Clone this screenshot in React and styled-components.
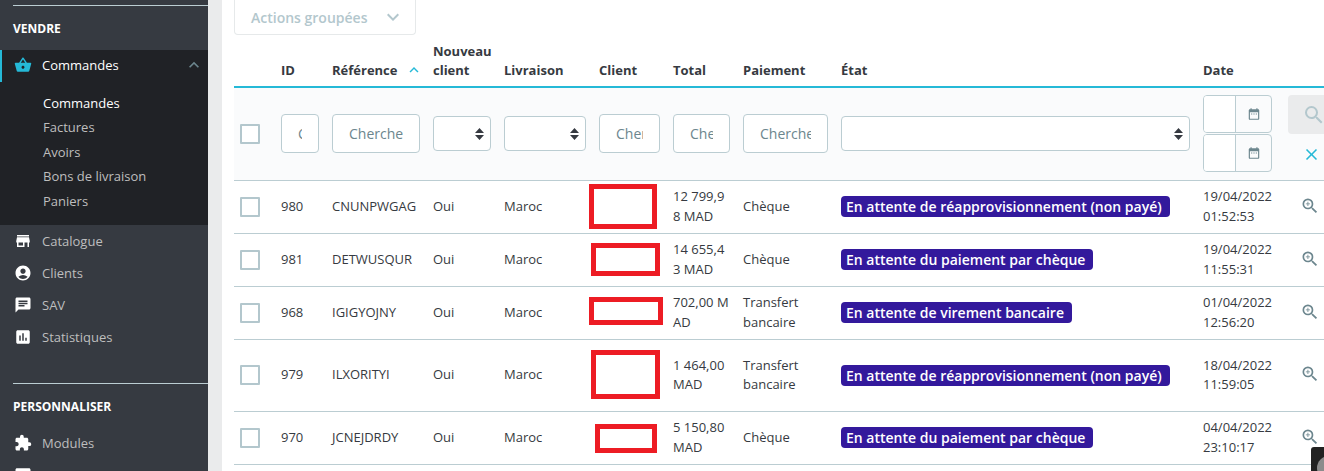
import React from "react";
import styled, { createGlobalStyle } from "styled-components";
import {
  MdShoppingBasket,
  MdStore,
  MdAccountCircle,
  MdChat,
  MdAssessment,
  MdExtension,
  MdDesktopMac,
  MdKeyboardArrowUp,
  MdKeyboardArrowDown,
  MdDateRange,
  MdSearch,
  MdClose,
  MdZoomIn,
} from "react-icons/md";

const GlobalStyle = createGlobalStyle`
  html, body {
    margin: 0;
    height: 471px;
    overflow: hidden;
    background: #fff;
    font-family: "Open Sans", "Liberation Sans", sans-serif;
    font-size: 13px;
    color: #363a41;
  }
  * { box-sizing: border-box; }
`;

const Page = styled.div`
  display: flex;
  width: 1324px;
  height: 471px;
  overflow: hidden;
`;

/* sidebar */
const Sidebar = styled.nav`
  flex: 0 0 208px;
  background: #363a41;
  padding-top: 5px;
  overflow: hidden;
`;

const Rule = styled.div`
  height: 1px;
  margin-left: 13px;
  background: #bbcdd2;
  margin-top: ${(p) => p.$top || 0}px;
`;

const SectionTitle = styled.div`
  height: ${(p) => p.$height}px;
  padding-left: 13px;
  padding-top: ${(p) => p.$shift || 0}px;
  display: flex;
  align-items: center;
  font-size: 12px;
  font-weight: 700;
  color: #fff;
  text-transform: uppercase;
`;

const ActiveGroup = styled.div`
  background: #202226;
  height: 175px;
`;

const NavRow = styled.div`
  height: 32px;
  display: flex;
  align-items: center;
  padding-left: ${(p) => (p.$active ? 12 : 14)}px;
  padding-bottom: ${(p) => (p.$active ? 2 : 0)}px;
  border-left: ${(p) => (p.$active ? "2px solid #25b9d7" : "none")};
  color: ${(p) => (p.$active ? "#fff" : "#bebebe")};

  svg {
    flex: 0 0 18px;
    font-size: 18px;
    color: ${(p) => (p.$active ? "#25b9d7" : "#fff")};
  }
  span {
    margin-left: 10px;
  }
`;

const Collapse = styled(MdKeyboardArrowUp)`
  && {
    margin-left: auto;
    margin-right: 4px;
    font-size: 20px;
    flex-basis: 20px;
    color: #6c868e;
  }
`;

const SubList = styled.div`
  padding: 8.5px 0 0 43px;
`;

const SubItem = styled.div`
  height: 24.5px;
  line-height: 24.5px;
  color: ${(p) => (p.$current ? "#fff" : "#bebebe")};
  font-weight: ${(p) => (p.$current ? 500 : 400)};
`;

/* main area */
const Gutter = styled.div`
  flex: 0 0 14px;
  background: #eaebec;
`;

const Content = styled.main`
  flex: 1;
  padding-left: 12px;
  overflow: hidden;
  position: relative;
`;

const BulkButton = styled.div`
  width: 182px;
  height: 35px;
  display: flex;
  align-items: center;
  justify-content: space-between;
  padding: 0 16px 0 16px;
  border: 1px solid #e6e9ea;
  border-top: none;
  border-radius: 0 0 4px 4px;
  color: #b3c7cd;
  font-size: 14px;
  font-weight: 600;

  svg {
    font-size: 24px;
    margin-right: -6px;
  }
`;

const Table = styled.table`
  table-layout: fixed;
  width: 1090px;
  border-collapse: collapse;
`;

const Th = styled.th`
  height: 52px;
  padding: 0 0 6px 13px;
  vertical-align: bottom;
  text-align: left;
  font-weight: 700;
  font-size: 13px;
  line-height: 19px;
  color: #363a41;
  border-bottom: 2px solid #25b9d7;
  white-space: nowrap;
`;

const SortIcon = styled(MdKeyboardArrowUp)`
  font-size: 18px;
  color: #25b9d7;
  vertical-align: -4px;
  margin-left: 8px;
`;

const FilterRow = styled.tr`
  background: #fafbfc;
  height: 93px;
  border-bottom: 1px solid #bbcdd2;
`;

const FilterCell = styled.td`
  padding: 0 0 0 13px;
  vertical-align: middle;
`;

const FirstCell = styled.td`
  padding: 0 0 0 6px;
  vertical-align: middle;
`;

const Row = styled.tr`
  height: ${(p) => p.$height}px;
  border-bottom: 1px solid #bbcdd2;
`;

const Td = styled.td`
  padding: 0 0 0 13px;
  vertical-align: middle;
  line-height: 19.5px;
  color: #363a41;
  word-break: ${(p) => (p.$breakAll ? "break-all" : "normal")};
`;

const Check = styled.div`
  width: 20px;
  height: 20px;
  background: #fff;
  border: 2px solid #b3c7cd;
  border-radius: 1px;
`;

const TextFilter = styled.input`
  display: block;
  width: 100%;
  height: 39px;
  padding: 0 16px;
  border: 1px solid #bbcdd2;
  border-radius: 4px;
  background: #fff;
  font: 14px "Open Sans", sans-serif;
  outline: none;

  &::placeholder {
    color: #6c868e;
    opacity: 1;
  }
`;

const SelectWrap = styled.div`
  position: relative;
`;

const SelectFilter = styled.select`
  display: block;
  width: 100%;
  height: 35px;
  appearance: none;
  border: 1px solid #bbcdd2;
  border-radius: 4px;
  background: #fff;
  outline: none;
`;

const Caret = styled.svg`
  position: absolute;
  right: 7px;
  top: 12px;
  width: 9px;
  height: 12px;
  fill: #363a41;
`;

const DateStack = styled.div`
  display: flex;
  flex-direction: column;
  gap: 1px;
`;

const DateField = styled.div`
  display: flex;
  height: 38px;
  border: 1px solid #bbcdd2;
  border-radius: 4px;
  overflow: hidden;
`;

const DateInput = styled.div`
  flex: 0 0 32px;
  background: #fff;
  border-right: 1px solid #bbcdd2;
`;

const DateAddon = styled.div`
  flex: 1;
  display: flex;
  align-items: center;
  justify-content: center;
  color: #6c868e;
  font-size: 14px;
`;

const ActionStack = styled.div`
  display: flex;
  flex-direction: column;
  align-items: flex-start;
  height: 77px;
  padding-left: 3px;
`;

const SearchButton = styled.div`
  flex: 0 0 39px;
  width: 48px;
  padding-left: 14px;
  display: flex;
  align-items: center;
  background: #eaebec;
  border-radius: 4px;
  color: #b3c7cd;
  font-size: 24px;
`;

const ResetIcon = styled(MdClose)`
  margin: 11px 0 0 14px;
  font-size: 19px;
  color: #25b9d7;
`;

const ViewIcon = styled(MdZoomIn)`
  display: block;
  margin: -2px 0 0 15px;
  font-size: 20px;
  color: #6c868e;
`;

const Badge = styled.span`
  display: inline-block;
  height: 21px;
  line-height: 21px;
  margin-top: 1px;
  padding: 0 8px 0 5px;
  border-radius: 4px;
  background: #33199c;
  color: #fff;
  font-size: 14px;
  font-weight: 600;
  white-space: nowrap;
`;

/* red marks drawn over the client names in the capture */
const Redaction = styled.div`
  width: ${(p) => p.$w}px;
  height: ${(p) => p.$h}px;
  margin: ${(p) => p.$dy}px 0 0 ${(p) => p.$dx}px;
  border: 5px solid #ed1c24;
`;

const ChatBubble = styled.div`
  position: absolute;
  right: 0;
  bottom: 0;
  width: 13px;
  height: 24px;
  background: #222;
  border-radius: 3px 0 0 0;
  overflow: hidden;

  &::after {
    content: "";
    position: absolute;
    left: 6px;
    top: 9px;
    width: 24px;
    height: 24px;
    border-radius: 50%;
    background: #8c8c8c;
  }
`;

const columns = [34, 51, 101, 71, 95, 74, 70, 98, 362, 82, 52];

const orders = [
  { id: 980, ref: "CNUNPWGAG", total: "12 799,98 MAD", pay: "Chèque", state: "En attente de réapprovisionnement (non payé)", date: "19/04/2022", time: "01:52:53", height: 53, box: { w: 68, h: 45, dx: -10, dy: -1 } },
  { id: 981, ref: "DETWUSQUR", total: "14 655,43 MAD", pay: "Chèque", state: "En attente du paiement par chèque", date: "19/04/2022", time: "11:55:31", height: 53, box: { w: 69, h: 33, dx: -8, dy: 0 } },
  { id: 968, ref: "IGIGYOJNY", total: "702,00 MAD", pay: "Transfert bancaire", state: "En attente de virement bancaire", date: "01/04/2022", time: "12:56:20", height: 53, box: { w: 74, h: 28, dx: -10, dy: -3 } },
  { id: 979, ref: "ILXORITYI", total: "1 464,00 MAD", pay: "Transfert bancaire", state: "En attente de réapprovisionnement (non payé)", date: "18/04/2022", time: "11:59:05", height: 72, box: { w: 69, h: 49, dx: -8, dy: -2 } },
  { id: 970, ref: "JCNEJDRDY", total: "5 150,80 MAD", pay: "Chèque", state: "En attente du paiement par chèque", date: "04/04/2022", time: "23:10:17", height: 53, box: { w: 62, h: 29, dx: -4, dy: 2 } },
];

const Select = () => (
  <SelectWrap>
    <SelectFilter />
    <Caret viewBox="0 0 9 12">
      <path d="M4.5 0 9 5H0zM0 7h9l-4.5 5z" />
    </Caret>
  </SelectWrap>
);

const DateBox = () => (
  <DateField>
    <DateInput />
    <DateAddon>
      <MdDateRange />
    </DateAddon>
  </DateField>
);

export default function App() {
  return (
    <Page>
      <GlobalStyle />
      <Sidebar>
        <Rule />
        <SectionTitle $height={44}>Vendre</SectionTitle>
        <ActiveGroup>
          <NavRow $active>
            <MdShoppingBasket />
            <span>Commandes</span>
            <Collapse />
          </NavRow>
          <SubList>
            <SubItem $current>Commandes</SubItem>
            <SubItem>Factures</SubItem>
            <SubItem>Avoirs</SubItem>
            <SubItem>Bons de livraison</SubItem>
            <SubItem>Paniers</SubItem>
          </SubList>
        </ActiveGroup>
        <NavRow>
          <MdStore />
          <span>Catalogue</span>
        </NavRow>
        <NavRow>
          <MdAccountCircle />
          <span>Clients</span>
        </NavRow>
        <NavRow>
          <MdChat />
          <span>SAV</span>
        </NavRow>
        <NavRow>
          <MdAssessment />
          <span>Statistiques</span>
        </NavRow>
        <Rule $top={30} />
        <SectionTitle $height={43} $shift={2}>Personnaliser</SectionTitle>
        <NavRow>
          <MdExtension />
          <span>Modules</span>
        </NavRow>
        <NavRow>
          <MdDesktopMac />
        </NavRow>
      </Sidebar>
      <Gutter />
      <Content>
        <BulkButton>
          Actions groupées
          <MdKeyboardArrowDown />
        </BulkButton>
        <Table>
          <colgroup>
            {columns.map((w, i) => (
              <col key={i} width={w} />
            ))}
          </colgroup>
          <thead>
            <tr>
              <Th />
              <Th>ID</Th>
              <Th>
                Référence
                <SortIcon />
              </Th>
              <Th>
                Nouveau
                <br />
                client
              </Th>
              <Th>Livraison</Th>
              <Th>Client</Th>
              <Th>Total</Th>
              <Th>Paiement</Th>
              <Th>État</Th>
              <Th>Date</Th>
              <Th />
            </tr>
            <FilterRow>
              <FirstCell>
                <Check />
              </FirstCell>
              <FilterCell>
                <TextFilter placeholder="Chercher ID" />
              </FilterCell>
              <FilterCell>
                <TextFilter placeholder="Chercher référence" />
              </FilterCell>
              <FilterCell>
                <Select />
              </FilterCell>
              <FilterCell>
                <Select />
              </FilterCell>
              <FilterCell>
                <TextFilter placeholder="Chercher client" />
              </FilterCell>
              <FilterCell>
                <TextFilter placeholder="Chercher total" />
              </FilterCell>
              <FilterCell>
                <TextFilter placeholder="Chercher paiement" />
              </FilterCell>
              <FilterCell>
                <Select />
              </FilterCell>
              <FilterCell>
                <DateStack>
                  <DateBox />
                  <DateBox />
                </DateStack>
              </FilterCell>
              <FilterCell>
                <ActionStack>
                  <SearchButton>
                    <MdSearch />
                  </SearchButton>
                  <ResetIcon />
                </ActionStack>
              </FilterCell>
            </FilterRow>
          </thead>
          <tbody>
            {orders.map((o) => (
              <Row key={o.id} $height={o.height}>
                <FirstCell>
                  <Check />
                </FirstCell>
                <Td>{o.id}</Td>
                <Td>{o.ref}</Td>
                <Td>Oui</Td>
                <Td>Maroc</Td>
                <Td>
                  <Redaction $w={o.box.w} $h={o.box.h} $dx={o.box.dx} $dy={o.box.dy} />
                </Td>
                <Td $breakAll>{o.total}</Td>
                <Td>{o.pay}</Td>
                <Td>
                  <Badge>{o.state}</Badge>
                </Td>
                <Td>
                  {o.date}
                  <br />
                  {o.time}
                </Td>
                <Td>
                  <ViewIcon />
                </Td>
              </Row>
            ))}
          </tbody>
        </Table>
        <ChatBubble />
      </Content>
    </Page>
  );
}
